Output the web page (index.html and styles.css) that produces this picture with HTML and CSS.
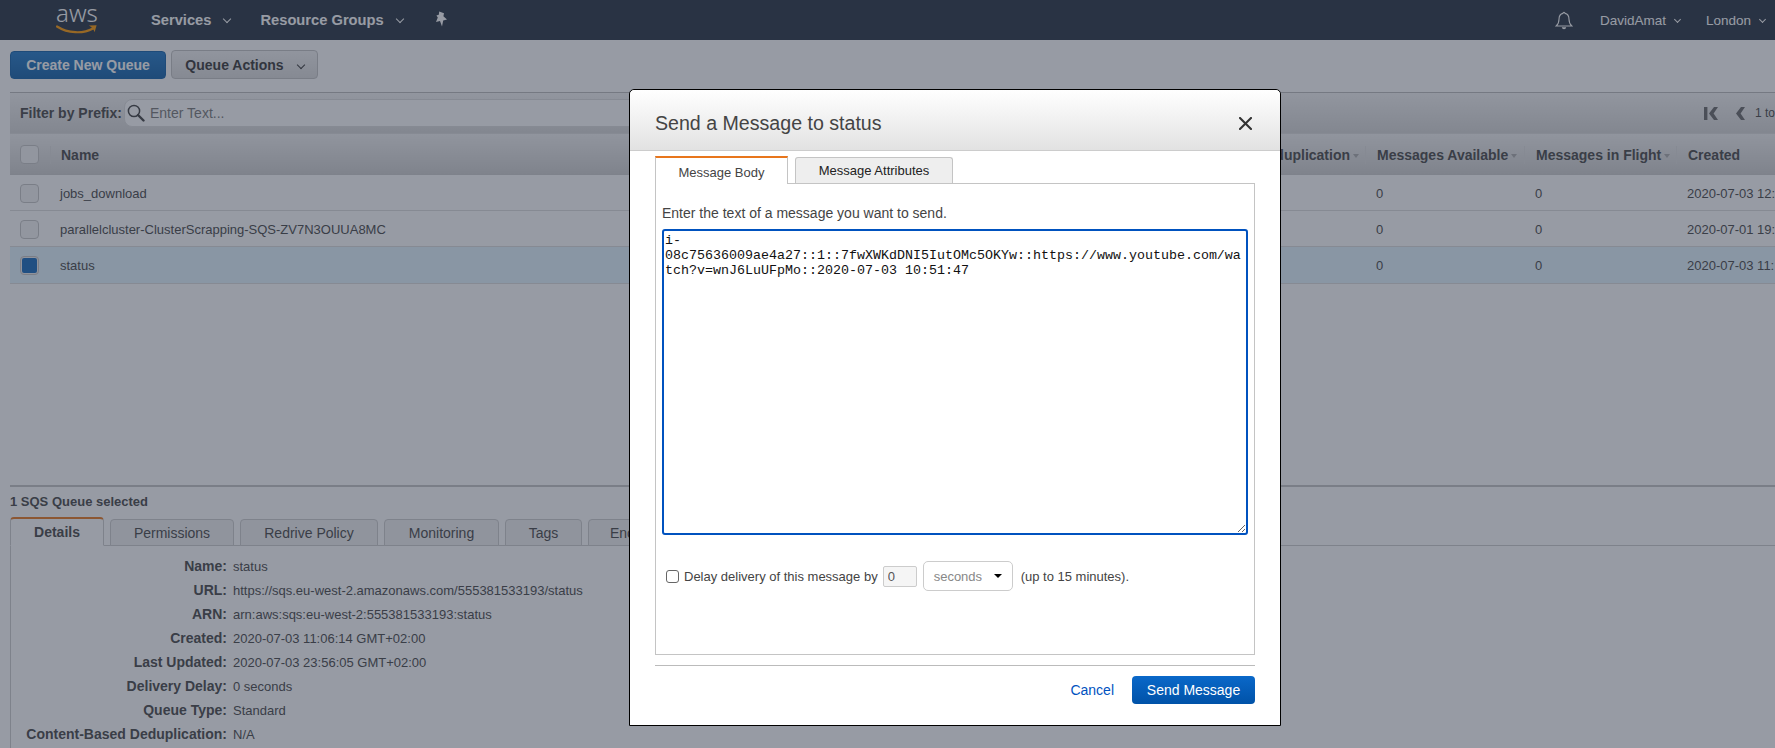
FILE: index.html
```html
<!DOCTYPE html>
<html>
<head>
    <title>Simple Queue Service</title>
    <meta charset="utf-8">
    <link rel="stylesheet" href="styles.css">
</head>

<body>

    <header class="topbar">
        <div class="logo">
            <span class="logo-text">aws</span>
            <svg class="logo-smile" width="42" height="11" viewBox="0 0 42 11">
                <path d="M1 2.5C12 9.5 27 10 37 4.5" fill="none" stroke="#f90" stroke-width="2.2" stroke-linecap="round"/>
                <path d="M33 1.6L40.6 1.2L38.6 8.2C38.2 6 36 3.4 33 1.6Z" fill="#f90"/>
            </svg>
        </div>
        <a class="nav-item nav-services">Services<i class="chev"></i></a>
        <a class="nav-item nav-groups">Resource Groups<i class="chev"></i></a>
        <svg class="pin" width="13" height="16" viewBox="0 0 13 16">
            <path d="M4.2 0.6L9 2.2L8.4 5.2L12 8.4L8.2 9.4L7 15.6L5 10L1 11L2.8 6.6L1.4 4.4L3.8 3.8Z" fill="#fff"/>
        </svg>
        <div class="topbar-right">
            <svg class="bell" width="18" height="19" viewBox="0 0 18 19">
                <path d="M9 1.2C9.6 1.2 10 1.7 10 2.4C12.8 3 14 5.3 14 8.2C14 11.4 15 13.4 16.8 15H1.2C3 13.4 4 11.4 4 8.2C4 5.3 5.2 3 8 2.4C8 1.7 8.4 1.2 9 1.2Z" fill="none" stroke="#fff" stroke-width="1.1"/>
                <path d="M6.8 16.2C7 17.4 7.9 18.2 9 18.2C10.1 18.2 11 17.4 11.2 16.2Z" fill="#fff"/>
            </svg>
            <a class="nav-small nav-user">DavidAmat<i class="caret-sm"></i></a>
            <a class="nav-small">London<i class="caret-sm"></i></a>
        </div>
    </header>

    <main class="page">
        <div class="actions">
            <button class="btn btn-primary">Create New Queue</button>
            <button class="btn btn-default">Queue Actions<i class="chev chev-dark"></i></button>
        </div>

        <div class="filter-bar">
            <label class="filter-label">Filter by Prefix:</label>
            <div class="filter-box">
                <svg class="search-icon" width="18" height="18" viewBox="0 0 18 18">
                    <circle cx="7" cy="7" r="5.6" fill="none" stroke="#000" stroke-width="1.5"/>
                    <path d="M11 11L16.5 16.5" stroke="#000" stroke-width="2.4" stroke-linecap="round"/>
                </svg>
                <input class="filter-input" type="text" placeholder="Enter Text...">
            </div>
            <div class="pager">
                <svg width="16" height="13" viewBox="0 0 16 13">
                    <path d="M0 0H3.4V13H0Z" fill="#666"/>
                    <path d="M10 0H14L9.6 6.5L14 13H10L5 6.5Z" fill="#666"/>
                </svg>
                <svg class="pager-prev" width="11" height="13" viewBox="0 0 11 13">
                    <path d="M6 0H10L5.6 6.5L10 13H6L1 6.5Z" fill="#666"/>
                </svg>
                <span>1 to</span>
            </div>
        </div>

        <div class="queue-table">
            <div class="row row-head">
                <div class="cell-check"><span class="check"></span></div>
                <div class="head-cell head-name">Name</div>
                <div class="head-cell head-dedupe">Content-Based Deduplication<i class="sort"></i></div>
                <div class="head-cell">Messages Available<i class="sort"></i></div>
                <div class="head-cell">Messages in Flight<i class="sort"></i></div>
                <div class="head-cell">Created</div>
            </div>
            <div class="row">
                <div class="cell-check"><span class="check"></span></div>
                <div class="cell cell-name">jobs_download</div>
                <div class="cell"></div>
                <div class="cell">0</div>
                <div class="cell">0</div>
                <div class="cell">2020-07-03 12:</div>
            </div>
            <div class="row">
                <div class="cell-check"><span class="check"></span></div>
                <div class="cell cell-name">parallelcluster-ClusterScrapping-SQS-ZV7N3OUUA8MC</div>
                <div class="cell"></div>
                <div class="cell">0</div>
                <div class="cell">0</div>
                <div class="cell">2020-07-01 19:</div>
            </div>
            <div class="row row-selected">
                <div class="cell-check"><span class="check check-on"></span></div>
                <div class="cell cell-name">status</div>
                <div class="cell"></div>
                <div class="cell">0</div>
                <div class="cell">0</div>
                <div class="cell">2020-07-03 11:</div>
            </div>
        </div>

        <section class="detail">
            <h3 class="detail-title">1 SQS Queue selected</h3>
            <div class="detail-tabs">
                <a class="detail-tab detail-tab-on">Details</a>
                <a class="detail-tab tab-permissions">Permissions</a>
                <a class="detail-tab tab-redrive">Redrive Policy</a>
                <a class="detail-tab tab-monitoring">Monitoring</a>
                <a class="detail-tab tab-tags">Tags</a>
                <a class="detail-tab tab-encryption">Encryption</a>
            </div>
            <dl class="detail-list">
                <dt>Name:</dt><dd>status</dd>
                <dt>URL:</dt><dd>https://sqs.eu-west-2.amazonaws.com/555381533193/status</dd>
                <dt>ARN:</dt><dd>arn:aws:sqs:eu-west-2:555381533193:status</dd>
                <dt>Created:</dt><dd>2020-07-03 11:06:14 GMT+02:00</dd>
                <dt>Last Updated:</dt><dd>2020-07-03 23:56:05 GMT+02:00</dd>
                <dt>Delivery Delay:</dt><dd>0 seconds</dd>
                <dt>Queue Type:</dt><dd>Standard</dd>
                <dt>Content-Based Deduplication:</dt><dd>N/A</dd>
            </dl>
        </section>
    </main>

    <div class="overlay"></div>

    <div class="modal">
        <div class="modal-head">
            <h2 class="modal-title">Send a Message to status</h2>
            <svg class="modal-close" width="13" height="13" viewBox="0 0 13 13">
                <path d="M1 1L12 12M12 1L1 12" stroke="#333" stroke-width="2.1" stroke-linecap="square"/>
            </svg>
        </div>
        <div class="modal-body">
            <div class="msg-tabs">
                <a class="msg-tab msg-tab-on">Message Body</a>
                <a class="msg-tab msg-tab-off">Message Attributes</a>
            </div>
            <div class="msg-panel">
                <p class="msg-intro">Enter the text of a message you want to send.</p>
                <textarea class="msg-text" spellcheck="false">i-
08c75636009ae4a27::1::7fwXWKdDNI5IutOMc5OKYw::https://www.youtube.com/wa
tch?v=wnJ6LuUFpMo::2020-07-03 10:51:47</textarea>
                <div class="delay-row">
                    <input class="delay-check" type="checkbox">
                    <span>Delay delivery of this message by</span>
                    <input class="delay-input" type="text" value="0">
                    <div class="delay-select"><span>seconds</span><i class="select-caret"></i></div>
                    <span>(up to 15 minutes).</span>
                </div>
            </div>
            <div class="modal-foot">
                <a class="cancel">Cancel</a>
                <button class="btn-send">Send Message</button>
            </div>
        </div>
    </div>

</body>
</html>
```

FILE: styles.css
```css
* {
    box-sizing: border-box;
}

html, body {
    margin: 0;
    height: 748px;
    overflow: hidden;
}

body {
    position: relative;
    background-color: #fff;
    color: #444;
    font-family: "Liberation Sans", Arial, sans-serif;
    font-size: 13px;
}

/* top bar */
.topbar {
    display: flex;
    align-items: center;
    height: 40px;
    padding-left: 56px;
    background-color: #232f3e;
    color: #fff;
}

.logo {
    display: flex;
    flex-direction: column;
    width: 42px;
    height: 34px;
    margin-top: -4px;
}

.logo-text {
    font-family: "Noto Sans", sans-serif;
    font-size: 24px;
    font-weight: 300;
    line-height: 24px;
    text-align: center;
}

.logo-smile {
    margin-top: -1px;
}

.nav-item {
    display: flex;
    align-items: center;
    font-size: 14.7px;
    font-weight: bold;
}

.nav-services {
    margin-left: 53px;
}

.nav-groups {
    margin-left: 30px;
}

.pin {
    margin-left: 32px;
    margin-top: -3px;
}

.chev {
    width: 6px;
    height: 6px;
    margin-left: 13px;
    margin-top: -2px;
    border-right: 1.6px solid #fff;
    border-bottom: 1.6px solid #fff;
    transform: rotate(45deg);
}

.chev-dark {
    display: inline-block;
    margin-left: 14px;
    vertical-align: 2px;
    border-color: #333;
}

.topbar-right {
    display: flex;
    align-items: center;
    margin-left: auto;
    padding-right: 10px;
}

.nav-small {
    display: flex;
    align-items: center;
    margin-left: 26px;
    font-size: 13.5px;
}

.nav-user {
    margin-left: 27px;
}

.caret-sm {
    width: 5px;
    height: 5px;
    margin-left: 9px;
    margin-top: -2px;
    border-right: 1.5px solid #fff;
    border-bottom: 1.5px solid #fff;
    transform: rotate(45deg);
}

/* main page */
.page {
    padding-left: 10px;
}

.actions {
    display: flex;
    align-items: flex-end;
    gap: 5px;
    height: 39px;
}

.btn {
    height: 28px;
    border-radius: 4px;
    font-family: inherit;
    font-size: 14px;
    font-weight: bold;
}

.btn-primary {
    width: 156px;
    border: 1px solid #0f5fa8;
    background: linear-gradient(#1f78c8, #0f5fa8);
    color: #fff;
}

.btn-default {
    width: 147px;
    height: 29px;
    border: 1px solid #c2c2c2;
    background: linear-gradient(#f2f2f2, #dcdcdc);
    color: #333;
}

.filter-bar {
    display: flex;
    align-items: center;
    height: 42px;
    margin-top: 13px;
    padding-left: 10px;
    border-top: 1px solid #bbb;
    border-bottom: 1px solid #ddd;
    background: linear-gradient(#f4f4f4, #d6d6d6);
}

.filter-label {
    flex: none;
    width: 104px;
    font-size: 14px;
    font-weight: bold;
    white-space: nowrap;
}

.filter-box {
    display: flex;
    align-items: center;
    flex: none;
    width: 700px;
    height: 28px;
    padding-left: 2px;
    border: 1px solid #ddd;
    border-radius: 8px;
    background-color: #fff;
}

.search-icon {
    opacity: 0.75;
}

.filter-input {
    width: 300px;
    margin-left: 5px;
    padding: 0;
    border: 0;
    outline: 0;
    background: transparent;
    font-family: inherit;
    font-size: 14px;
}

.filter-input::placeholder {
    color: #777;
}

.pager {
    display: flex;
    align-items: center;
    flex: none;
    margin-left: auto;
    font-size: 12px;
    white-space: nowrap;
}

.pager-prev {
    margin-left: 15px;
    margin-right: 9px;
}

.queue-table {
    width: 1765px;
}

.row {
    display: grid;
    grid-template-columns: 40px 1092px 223px 159px 152px 99px;
    align-items: center;
    height: 36px;
    padding-top: 1px;
    border-bottom: 1px solid #ddd;
    background-color: #fff;
}

.row-head {
    height: 41px;
    border-bottom: 1px solid #ccc;
    background: linear-gradient(#f2f2f2, #cfcfcf);
}

.row-selected {
    height: 37px;
    background-color: #e3f5ff;
}

.cell-check {
    padding-left: 10px;
    line-height: 0;
}

.check {
    display: inline-block;
    width: 19px;
    height: 19px;
    border: 1px solid #c4c4c4;
    border-radius: 4px;
    background-color: #f5f5f5;
}

.check-on {
    border: 2px solid #eee;
    outline: 1px solid #c4c4c4;
    outline-offset: -1px;
    background-color: #1166bb;
}

.head-cell {
    height: 18px;
    padding-left: 11px;
    border-left: 1px solid #ddd;
    color: #444;
    font-size: 14px;
    font-weight: bold;
    line-height: 18px;
    white-space: nowrap;
}

.head-name {
    padding-left: 10px;
}

.head-dedupe {
    border-left: 0;
    padding-left: 12px;
}

.sort {
    display: inline-block;
    margin-left: 3px;
    border-top: 4px solid #aaa;
    border-left: 3px solid transparent;
    border-right: 3px solid transparent;
    vertical-align: 2px;
}

.cell {
    padding-left: 11px;
    white-space: nowrap;
}

.cell-name {
    padding-left: 10px;
}

/* details pane */
.detail {
    margin-top: 201px;
    border-top: 2px solid #c4c4c4;
}

.detail-title {
    margin: 0;
    height: 30px;
    font-size: 13px;
    line-height: 30px;
}

.detail-tabs {
    display: flex;
    align-items: flex-end;
    gap: 6px;
    height: 29px;
    border-bottom: 1px solid #ccc;
}

.detail-tab {
    height: 27px;
    margin-bottom: -1px;
    border: 1px solid #ccc;
    border-radius: 4px 4px 0 0;
    background-color: #f0f0f0;
    font-size: 14px;
    line-height: 26px;
    text-align: center;
}

.detail-tab-on {
    width: 94px;
    height: 29px;
    border-top: 2px solid #e8761c;
    border-bottom: 1px solid #fff;
    background-color: #fff;
    font-weight: bold;
}

.tab-permissions {
    width: 124px;
}

.tab-redrive {
    width: 138px;
}

.tab-monitoring {
    width: 115px;
}

.tab-tags {
    width: 77px;
}

.tab-encryption {
    width: 110px;
}

.detail-list {
    display: grid;
    grid-template-columns: 216px 1fr;
    grid-auto-rows: 24px;
    column-gap: 6px;
    align-items: center;
    height: 202px;
    margin: 0;
    padding-top: 8px;
    border-left: 1px solid #ccc;
}

.detail-list dt {
    color: #444;
    font-size: 14px;
    font-weight: bold;
    text-align: right;
    white-space: nowrap;
}

.detail-list dd {
    margin: 0;
    font-size: 13px;
}

/* dim layer and dialog */
.overlay {
    position: absolute;
    top: 0;
    left: 0;
    right: 0;
    bottom: 0;
    background-color: rgba(47, 56, 74, 0.5);
}

.modal {
    position: absolute;
    top: 89px;
    left: 629px;
    width: 652px;
    height: 637px;
    border: 1px solid #000;
    border-radius: 5px 5px 0 0;
    background-color: #fff;
}

.modal-head {
    display: flex;
    align-items: center;
    justify-content: space-between;
    height: 61px;
    padding: 6px 28px 0 25px;
    border-bottom: 1px solid #ccc;
    border-radius: 5px 5px 0 0;
    background: linear-gradient(#fff, #e2e2e2);
}

.modal-title {
    margin: 0;
    color: #444;
    font-size: 19.6px;
    font-weight: normal;
}

.modal-body {
    padding: 5px 25px 0;
}

.msg-tabs {
    display: flex;
    align-items: flex-end;
    gap: 7px;
    height: 27px;
}

.msg-tab {
    font-size: 13px;
    text-align: center;
}

.msg-tab-on {
    position: relative;
    z-index: 1;
    width: 133px;
    height: 28px;
    margin-bottom: -1px;
    border: 1px solid #c4c4c4;
    border-top: 2px solid #e8761c;
    border-bottom: 0;
    background-color: #fff;
    line-height: 30px;
}

.msg-tab-off {
    width: 158px;
    height: 26px;
    border: 1px solid #c4c4c4;
    border-bottom: 0;
    border-radius: 3px 3px 0 0;
    background-color: #eee;
    color: #222;
    line-height: 26px;
}

.msg-panel {
    height: 472px;
    padding: 0 6px;
    border: 1px solid #c4c4c4;
}

.msg-intro {
    margin: 20px 0 7px;
    font-size: 14px;
    line-height: 18px;
    color: #444;
}

.msg-text {
    display: block;
    width: 586px;
    height: 306px;
    padding: 2px 1px;
    border: 2px solid #0052bf;
    border-radius: 3px;
    outline: 0;
    color: #111;
    font-family: "Liberation Mono", monospace;
    font-size: 13.33px;
    line-height: 15px;
    white-space: pre;
    overflow: hidden;
}

.delay-row {
    display: flex;
    align-items: center;
    height: 30px;
    margin-top: 26px;
    padding-left: 4px;
    color: #444;
}

.delay-check {
    appearance: none;
    width: 13px;
    height: 13px;
    margin: 0 5px 0 0;
    border: 1px solid #666;
    border-radius: 3px;
    background-color: #fff;
}

.delay-input {
    width: 34px;
    height: 21px;
    margin-left: 5px;
    padding: 0 4px;
    border: 1px solid #ccc;
    border-radius: 2px;
    background-color: #f5f5f5;
    color: #555;
    font-family: inherit;
    font-size: 13px;
}

.delay-select {
    display: flex;
    align-items: center;
    justify-content: space-between;
    width: 90px;
    height: 30px;
    margin: 0 8px 0 6px;
    padding: 0 10px;
    border: 1px solid #ccc;
    border-radius: 5px;
    color: #888;
}

.select-caret {
    border-top: 4px solid #000;
    border-left: 4px solid transparent;
    border-right: 4px solid transparent;
}

.modal-foot {
    display: flex;
    align-items: center;
    justify-content: flex-end;
    gap: 18px;
    height: 39px;
    margin-top: 10px;
    border-top: 1px solid #bbb;
    padding-top: 10px;
}

.cancel {
    color: #0052bf;
    font-size: 14px;
}

.btn-send {
    width: 123px;
    height: 28px;
    border: 0;
    border-radius: 4px;
    background: linear-gradient(#0a68c9, #0052a8);
    color: #fff;
    font-family: inherit;
    font-size: 14px;
}
```
